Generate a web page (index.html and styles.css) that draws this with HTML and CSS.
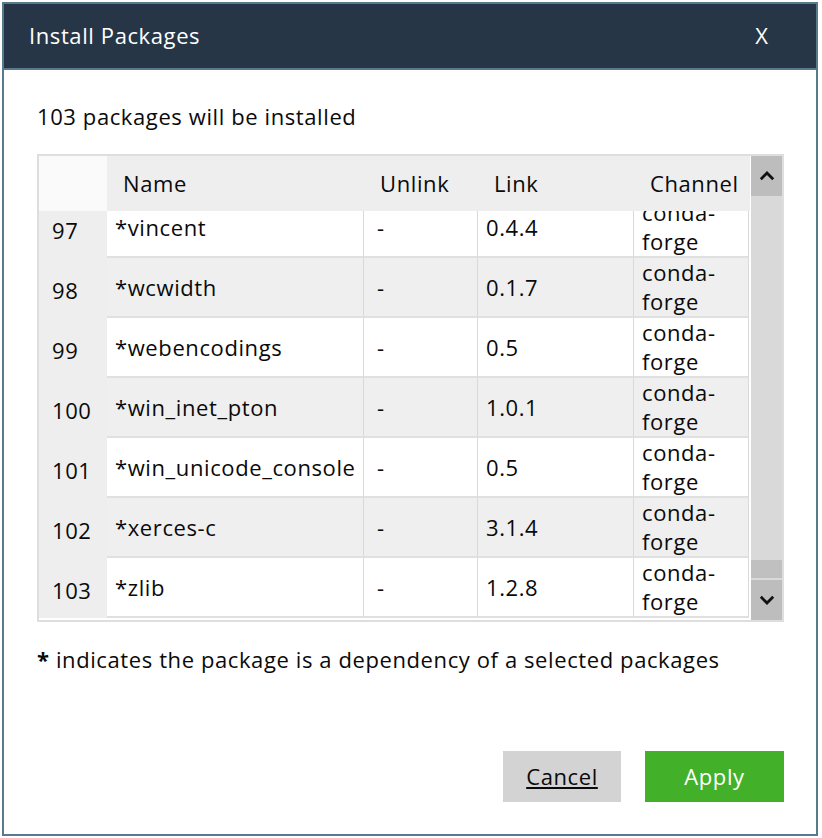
FILE: index.html
```html
<!DOCTYPE html>
<html lang="en">
<head>
<meta charset="utf-8">
<title>Install Packages</title>
<link rel="stylesheet" href="styles.css">
</head>
<body>
<div class="dialog">
  <div class="titlebar">
    <span class="title">Install Packages</span>
    <span class="close">X</span>
  </div>
  <div class="content">
    <p class="summary">103 packages will be installed</p>
    <div class="table">
      <div class="grid-area">
        <div class="thead">
          <div class="corner"></div>
          <div class="th">Name</div>
          <div class="th">Unlink</div>
          <div class="th">Link</div>
          <div class="th">Channel</div>
        </div>
        <div class="tbody">
          <div class="rows">
            <div class="row"><div class="num">97</div><div class="td">*vincent</div><div class="td dash">-</div><div class="td">0.4.4</div><div class="td chan">conda-forge</div></div>
            <div class="row alt"><div class="num">98</div><div class="td">*wcwidth</div><div class="td dash">-</div><div class="td">0.1.7</div><div class="td chan">conda-forge</div></div>
            <div class="row"><div class="num">99</div><div class="td">*webencodings</div><div class="td dash">-</div><div class="td">0.5</div><div class="td chan">conda-forge</div></div>
            <div class="row alt"><div class="num">100</div><div class="td">*win_inet_pton</div><div class="td dash">-</div><div class="td">1.0.1</div><div class="td chan">conda-forge</div></div>
            <div class="row"><div class="num">101</div><div class="td">*win_unicode_console</div><div class="td dash">-</div><div class="td">0.5</div><div class="td chan">conda-forge</div></div>
            <div class="row alt"><div class="num">102</div><div class="td">*xerces-c</div><div class="td dash">-</div><div class="td">3.1.4</div><div class="td chan">conda-forge</div></div>
            <div class="row"><div class="num">103</div><div class="td">*zlib</div><div class="td dash">-</div><div class="td">1.2.8</div><div class="td chan">conda-forge</div></div>
          </div>
        </div>
      </div>
      <div class="scrollbar">
        <div class="sb-btn">
          <svg width="16" height="10" viewBox="0 0 16 10"><polyline points="1.8,8.2 8,2 14.2,8.2" fill="none" stroke="#111" stroke-width="2.8"/></svg>
        </div>
        <div class="sb-track"><div class="sb-thumb"></div></div>
        <div class="sb-btn">
          <svg width="16" height="10" viewBox="0 0 16 10"><polyline points="1.8,1.8 8,8 14.2,1.8" fill="none" stroke="#111" stroke-width="2.8"/></svg>
        </div>
      </div>
    </div>
    <p class="note"><b>*</b> indicates the package is a dependency of a selected packages</p>
    <div class="actions">
      <button class="btn cancel">Cancel</button>
      <button class="btn apply">Apply</button>
    </div>
  </div>
</div>
</body>
</html>
```
FILE: styles.css
```css
* { box-sizing: border-box; }
html, body { margin: 0; padding: 0; background: #ffffff; }
body {
  font-family: "Open Sans", "DejaVu Sans", sans-serif;
  font-size: 22px;
  letter-spacing: 0.6px;
  color: #0a0a0a;
}
.dialog {
  margin: 2px 0 0 2px;
  width: 816px;
  height: 834px;
  border: 2px solid #587a8d;
  background: #fff;
  display: flex;
  flex-direction: column;
}
.titlebar {
  height: 66px;
  flex: none;
  background: #263646;
  border-bottom: 2px solid #587a8d;
  display: flex;
  align-items: center;
  justify-content: space-between;
  padding: 0 48px 2px 25px;
  color: #fff;
}
.title { font-size: 22px; }
.close { font-size: 22px; letter-spacing: 0; }
.content {
  flex: 1;
  display: flex;
  flex-direction: column;
  padding: 0 32px 32px 33px;
}
.summary {
  margin: 31px 0 0;
  line-height: 30px;
}
.table {
  margin-top: 23px;
  width: 747px;
  height: 468px;
  border: 2px solid #dedede;
  display: flex;
  background: #fff;
}
.grid-area {
  width: 711px;
  display: flex;
  flex-direction: column;
}
.thead {
  height: 55px;
  flex: none;
  display: grid;
  grid-template-columns: 68px 257px 114px 156px 116px;
  background: #eeeeee;
}
.corner { background: #fafafa; }
.th {
  display: flex;
  align-items: center;
  padding: 0 0 2px 16px;
  overflow: hidden;
  white-space: nowrap;
}
.th:last-child { padding-right: 10px; }
.tbody {
  flex: 1;
  overflow: hidden;
}
.rows { margin-top: -13px; }
.row {
  display: grid;
  grid-template-columns: 68px 257px 114px 156px 115px;
  height: 60px;
}
.num {
  background: #eeeeee;
  display: flex;
  align-items: center;
  padding: 4px 0 0 13px;
}
.td {
  background: #fff;
  border-right: 1px solid #d9d9d9;
  border-bottom: 2px solid #e0e0e0;
  display: flex;
  align-items: center;
  padding: 0 0 0 8px;
  white-space: nowrap;
  overflow: hidden;
}
.row.alt .td { background: #efefef; }
.td.dash { padding-left: 13px; }
.td.chan {
  white-space: normal;
  line-height: 29px;
  padding-right: 4px;
}
.scrollbar {
  margin-left: 1px;
  width: 32px;
  display: flex;
  flex-direction: column;
  background: #d9d9d9;
}
.sb-btn {
  height: 40px;
  flex: none;
  background: #bdbdbd;
  display: flex;
  align-items: center;
  justify-content: center;
}
.sb-track {
  flex: 1;
  display: flex;
  flex-direction: column;
  justify-content: flex-end;
  padding-bottom: 2px;
}
.sb-thumb {
  height: 18px;
  background: #c0c0c0;
}
.note {
  margin: 22px 0 0;
  line-height: 30px;
}
.actions {
  margin-top: auto;
  display: flex;
  justify-content: flex-end;
  gap: 24px;
}
.btn {
  font-family: inherit;
  font-size: 22px;
  letter-spacing: 0.6px;
  height: 51px;
  border: none;
  padding: 0 0 2px;
  cursor: pointer;
}
.cancel {
  width: 118px;
  background: #d3d3d3;
  color: #0a0a0a;
  text-decoration: underline;
}
.apply {
  width: 139px;
  background: #43b02a;
  color: #fff;
}
```
